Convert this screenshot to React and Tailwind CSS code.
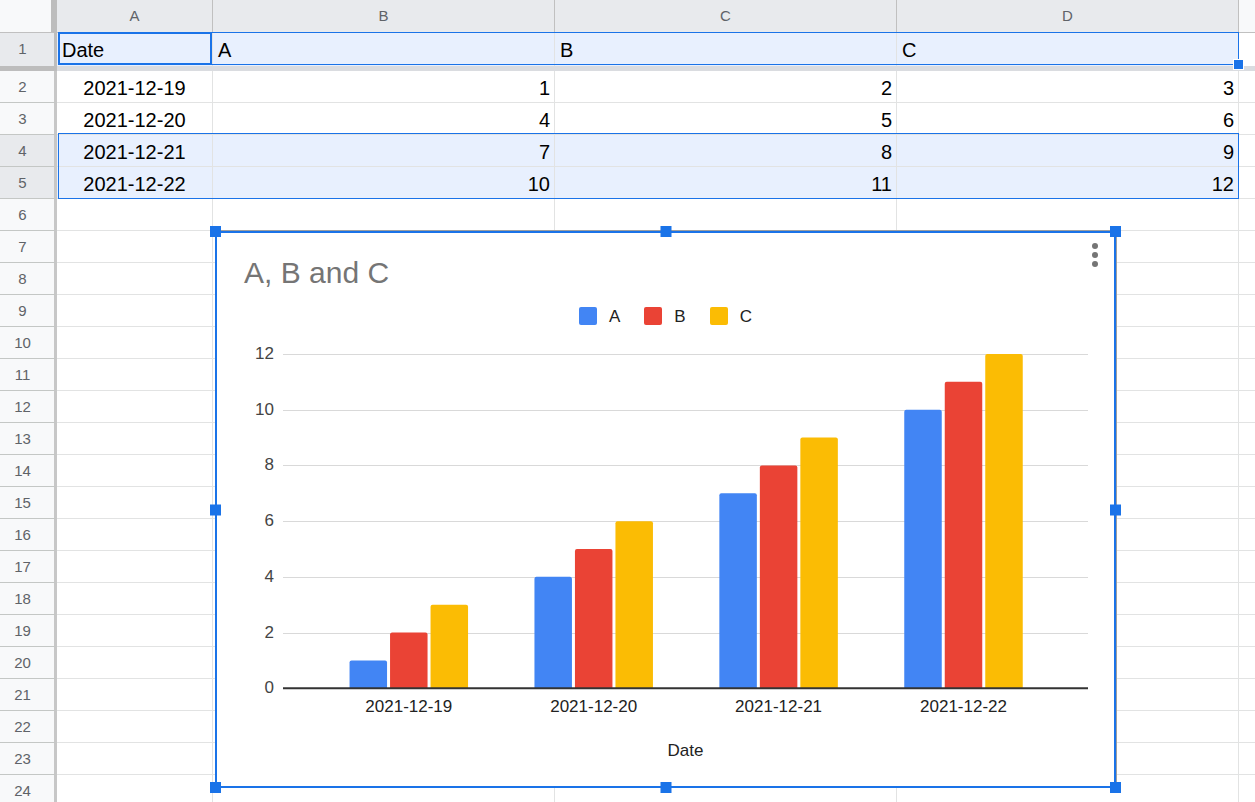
import React from 'react';

// column template shared by every sheet row
const COLS = 'grid grid-cols-[57px_156px_342px_342px_342px_1fr]';

const data = [
  ['2021-12-19', 1, 2, 3],
  ['2021-12-20', 4, 5, 6],
  ['2021-12-21', 7, 8, 9],
  ['2021-12-22', 10, 11, 12],
];

const series = [
  { name: 'A', color: '#4285f4' },
  { name: 'B', color: '#ea4335' },
  { name: 'C', color: '#fbbc04' },
];

// chart geometry (svg coords)
const BASE = 358.3;
const UNIT = 27.86;
const X0 = 191.8;
const STEP = 184.9;
const BAR_W = 37.5;
const OFFSETS = [-59.25, -18.75, 21.75];

const barPath = (x, w, top, bottom, r = 2) =>
  `M${x},${bottom}V${top + r}Q${x},${top} ${x + r},${top}H${x + w - r}Q${x + w},${top} ${x + w},${top + r}V${bottom}Z`;

const RowHeader = ({ n, selected }) => (
  <div
    className={`flex items-center justify-center pr-[9px] pt-[2px] border-r-[3px] border-r-[#c7c7c7] border-b border-b-[#c4c7c5] text-[15px] text-[#5f6368] ${
      selected ? 'bg-[#e8eaed]' : 'bg-[#f8f9fa]'
    }`}
  >
    {n}
  </div>
);

const Cell = ({ children, align = 'left', hl }) => (
  <div
    className={`flex items-center pt-[2px] border-r border-b border-[#e2e3e3] text-[20px] text-black overflow-hidden whitespace-nowrap ${
      align === 'right' ? 'justify-end pr-[4px]' : align === 'center' ? 'justify-center' : 'justify-start pl-[5px]'
    } ${hl ? 'bg-[#e8f0fe]' : 'bg-white'}`}
  >
    {children}
  </div>
);

const Handle = ({ className }) => (
  <div className={`absolute w-[11px] h-[11px] bg-[#1a73e8] ${className}`} />
);

const Chart = () => {
  const grid = [2, 4, 6, 8, 10, 12];
  return (
    <div className="absolute left-[215px] top-[231px] w-[901px] h-[557px] border-2 border-[#1a73e8] bg-white shadow-[1px_-1px_0_0_#9e9e9e]">
      <div className="flex justify-between items-start">
        <div className="pt-[25px] pl-[27px] text-[30px] leading-[30px] text-[#757575]">A, B and C</div>
        <div className="mt-[10px] mr-[16px] flex flex-col gap-[3px]">
          <div className="w-[6px] h-[6px] rounded-full bg-[#757575]" />
          <div className="w-[6px] h-[6px] rounded-full bg-[#757575]" />
          <div className="w-[6px] h-[6px] rounded-full bg-[#757575]" />
        </div>
      </div>

      <div className="mt-[19px] flex justify-center gap-[24px] h-[18px]">
        {series.map((s) => (
          <div key={s.name} className="flex items-center gap-[12px]">
            <div className="w-[18px] h-[18px] rounded-[2px]" style={{ background: s.color }} />
            <span className="pt-[2px] text-[17px] leading-[18px] text-[#222]">{s.name}</span>
          </div>
        ))}
      </div>

      <svg width="897" height="395" className="block mt-[5px]">
        {grid.map((v) => {
          const y = Math.round(BASE - v * UNIT) + 0.5;
          return <line key={v} x1="66" x2="871" y1={y} y2={y} stroke="#d9d9d9" strokeWidth="1" />;
        })}
        {data.map((row, i) =>
          series.map((s, j) => {
            const v = row[j + 1];
            const x = X0 + i * STEP + OFFSETS[j];
            return <path key={`${i}-${j}`} d={barPath(x, BAR_W, BASE - v * UNIT, BASE)} fill={s.color} />;
          })
        )}
        <line x1="66" x2="871" y1={BASE} y2={BASE} stroke="#333" strokeWidth="2" />
        {[0, ...grid].map((v) => (
          <text key={v} x="57" y={BASE - v * UNIT + 5} textAnchor="end" fontSize="17" fill="#444">
            {v}
          </text>
        ))}
        {data.map((row, i) => (
          <text key={row[0]} x={X0 + i * STEP} y="381.7" textAnchor="middle" fontSize="17" fill="#222">
            {row[0]}
          </text>
        ))}
      </svg>

      <div className="mt-[16px] ml-[66px] w-[805px] text-center text-[17px] leading-[20px] text-[#222]">Date</div>

      <Handle className="-left-[7px] -top-[7px]" />
      <Handle className="left-1/2 -translate-x-1/2 -top-[7px]" />
      <Handle className="-right-[7px] -top-[7px]" />
      <Handle className="-left-[7px] top-1/2 -translate-y-1/2" />
      <Handle className="-right-[7px] top-1/2 -translate-y-1/2" />
      <Handle className="-left-[7px] -bottom-[7px]" />
      <Handle className="left-1/2 -translate-x-1/2 -bottom-[7px]" />
      <Handle className="-right-[7px] -bottom-[7px]" />
    </div>
  );
};

export default function App() {
  const emptyRows = Array.from({ length: 19 }, (_, i) => i + 6);

  return (
    <div className="relative w-[1255px] h-[802px] overflow-hidden bg-white font-['Liberation_Sans',Arial,sans-serif]">
      {/* column headers */}
      <div className={`${COLS} h-[33px]`}>
        <div className="bg-[#f8f9fa] border-r-[6px] border-r-[#bdbdbd] border-b border-b-[#c0c0c0]" />
        {['A', 'B', 'C', 'D'].map((c) => (
          <div
            key={c}
            className="flex items-center justify-center bg-[#e8eaed] border-r border-b border-[#c0c0c0] text-[15px] text-[#5f6368]"
          >
            {c}
          </div>
        ))}
        <div className="bg-[#f8f9fa] border-b border-[#c0c0c0]" />
      </div>

      {/* frozen header row */}
      <div className={`${COLS} h-[33px]`}>
        <div className="flex items-center justify-center pr-[9px] border-r-[3px] border-r-[#bdbdbd] bg-[#e8eaed] text-[15px] text-[#5f6368]">
          1
        </div>
        {['Date', 'A', 'B', 'C'].map((h) => (
          <div key={h} className="flex items-center pl-[5px] border-r border-[#e2e3e3] bg-[#e8f0fe] text-[20px] text-black">
            {h}
          </div>
        ))}
        <div className="bg-white" />
      </div>
      <div className={`${COLS} h-[5px]`}>
        <div className="bg-[#bdbdbd]" />
        <div className="col-span-5 bg-[#dadce0]" />
      </div>

      {/* data rows */}
      {data.map((row, i) => {
        const hl = i >= 2;
        return (
          <div key={row[0]} className={`${COLS} h-[32px]`}>
            <RowHeader n={i + 2} selected={hl} />
            <Cell align="center" hl={hl}>{row[0]}</Cell>
            <Cell align="right" hl={hl}>{row[1]}</Cell>
            <Cell align="right" hl={hl}>{row[2]}</Cell>
            <Cell align="right" hl={hl}>{row[3]}</Cell>
            <div className="border-b border-[#e2e3e3]" />
          </div>
        );
      })}

      {emptyRows.map((n) => (
        <div key={n} className={`${COLS} h-[32px]`}>
          <RowHeader n={n} />
          <Cell />
          <Cell />
          <Cell />
          <Cell />
          <div className="border-b border-[#e2e3e3]" />
        </div>
      ))}

      {/* selection outlines */}
      <div className="absolute left-[58px] top-[32px] w-[1181px] h-[33px] border border-[#1a73e8]" />
      <div className="absolute left-[58px] top-[32px] w-[154px] h-[33px] border-2 border-[#1a73e8]" />
      <div className="absolute left-[1233px] top-[59px] w-[11px] h-[11px] bg-[#1a73e8] border border-white" />
      <div className="absolute left-[58px] top-[133px] w-[1181px] h-[66px] border border-[#1a73e8]" />

      <Chart />
    </div>
  );
}
